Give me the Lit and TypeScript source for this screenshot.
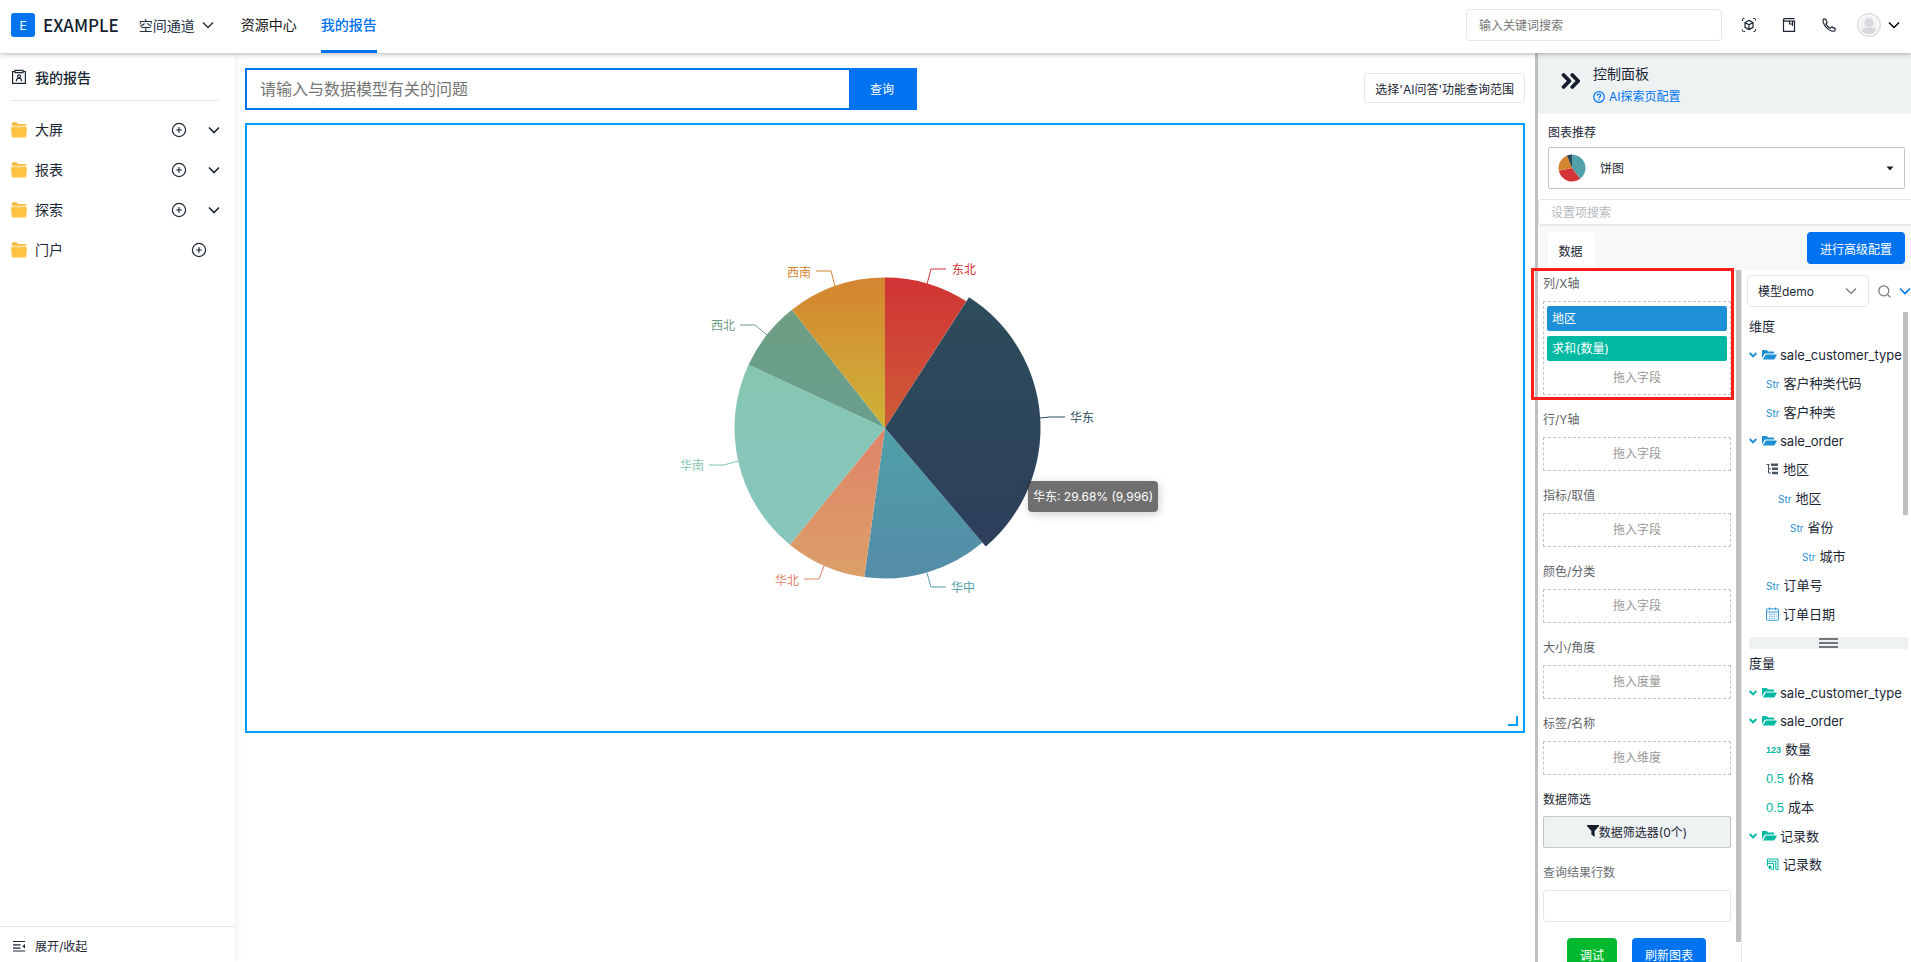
import { LitElement, html, svg, css } from "lit";
import { customElement, property } from "lit/decorators.js";
import { classMap } from "lit/directives/class-map.js";

type Slice = {
  name: string;
  from: number;
  to: number;
  top: string;
  bottom: string;
  line: string;
  x: number;
  y: number;
  anchor: string;
  active?: boolean;
};

const SLICES: Slice[] = [
  { name: "东北", from: 0, to: 32.7, top: "#d13334", bottom: "#ce5c38", line: "42,-144 46,-159 61,-159", x: 67, y: -154, anchor: "start" },
  { name: "华中", from: 139.6, to: 187.9, top: "#4ea0a9", bottom: "#558ca8", line: "42,145 46,159 61,159", x: 66, y: 164, anchor: "start" },
  { name: "华北", from: 187.9, to: 219.2, top: "#df8368", bottom: "#dca069", line: "-61,138 -66,151 -81,151", x: -86, y: 157, anchor: "end" },
  { name: "华南", from: 219.2, to: 294.9, top: "#86c6b1", bottom: "#87c5be", line: "-147,33 -161,37 -176,37", x: -181, y: 42, anchor: "end" },
  { name: "西北", from: 294.9, to: 321.8, top: "#6d9e83", bottom: "#6a9f8f", line: "-118,-93 -130,-103 -145,-103", x: -150, y: -98, anchor: "end" },
  { name: "西南", from: 321.8, to: 360, top: "#d58430", bottom: "#ceb439", line: "-50,-142 -54,-157 -69,-157", x: -74, y: -151, anchor: "end" },
  { name: "华东", from: 32.7, to: 139.6, top: "#2d4c5b", bottom: "#2d3f5b", line: "155,-10 165,-11 180,-11", x: 185, y: -6, anchor: "start", active: true },
];

const sector = (from: number, to: number, r: number, cx = 0, cy = 0) => {
  const point = (deg: number) => {
    const a = (deg * Math.PI) / 180;
    return `${(cx + r * Math.sin(a)).toFixed(2)} ${(cy - r * Math.cos(a)).toFixed(2)}`;
  };
  return `M${cx} ${cy}L${point(from)}A${r} ${r} 0 ${to - from > 180 ? 1 : 0} 1 ${point(to)}Z`;
};

const FONT = css`Inter, "Noto Sans CJK SC", sans-serif`;

const base = css`
  *, *::before, *::after { box-sizing: border-box; }
  svg { display: block; flex: none; }
  button, input, select { font: inherit; color: inherit; margin: 0; }
  button { cursor: pointer; padding: 0; border: 0; background: none; display: flex; align-items: center; justify-content: center; }
  a { color: inherit; text-decoration: none; }
  h1, h2, h3, p, ul { margin: 0; padding: 0; font: inherit; }
  ul { list-style: none; }
`;

const chevron = (size = 12, width = 2) => html`<svg width=${size} height=${size} viewBox="0 0 12 12" fill="none" stroke="currentColor" stroke-width=${width}><path d="M1 3.5L6 8.5L11 3.5" /></svg>`;

@customElement("app-header")
class AppHeader extends LitElement {
  static styles = [base, css`
    .bar { display: flex; align-items: center; height: 53px; background: #fff; box-shadow: 0 1px 5px rgba(0, 0, 0, 0.3); padding: 0 11px 3px; position: relative; z-index: 2; font-size: 14px; }
    .logo { width: 24px; height: 24px; border-radius: 3px; background: #0073f0; color: #fff; font-size: 12px; display: grid; place-items: center; margin-right: 8px; }
    .brand { font-family: "Noto Sans CJK SC", sans-serif; font-size: 17px; line-height: 24px; font-weight: 500; color: #141e2d; margin-right: 20px; }
    .space { gap: 7px; color: #243042; }
    .nav { display: flex; gap: 24px; margin: 0 0 -3px 27px; align-self: stretch; }
    .nav a { display: flex; align-items: center; border-bottom: 3px solid transparent; padding-bottom: 2px; color: #141414; }
    .nav a.current { color: #0073f0; border-bottom-color: #0073f0; font-weight: 500; }
    .search { margin-left: auto; width: 256px; height: 32px; border: 1px solid #e4e6e8; border-radius: 4px; padding: 0 12px; font-size: 12px; outline: none; background: #fff; }
    .search::placeholder { color: #757575; opacity: 1; }
    .tools { display: flex; align-items: center; gap: 24px; margin: 0 20px 0 19px; }
    .user { gap: 7px; }
  `];

  render() {
    return html`
      <header class="bar">
        <span class="logo">E</span>
        <span class="brand">EXAMPLE</span>
        <button class="space">空间通道 ${chevron(12, 1.4)}</button>
        <nav class="nav">
          <a href="#resources">资源中心</a>
          <a href="#reports" class="current">我的报告</a>
        </nav>
        <input class="search" type="search" aria-label="关键词搜索" placeholder="输入关键词搜索" />
        <div class="tools">
          <button aria-label="模型">
            <svg width="16" height="16" viewBox="0 0 16 16" fill="none" stroke="#1d2735" stroke-width="1.1"><path d="M1.500 4V1.500H4M12 1.500H14.500V4M14.500 12V14.500H12M4 14.500H1.500V12" stroke-dasharray="1.800 .9" /><path d="M8 3.400L12 5.500V10.300L8 12.600L4 10.300V5.500ZM4 5.500L8 7.800L12 5.500M8 7.800V12.600" stroke-width="1.200" /></svg>
          </button>
          <button aria-label="文档">
            <svg width="16" height="16" viewBox="0 0 16 16" fill="none" stroke="#1d2735" stroke-width="1.2"><path d="M13.5 1.6H3.6Q2.5 1.6 2.5 2.8V14.4H13.5V4.2H3.6Q2.5 4.2 2.5 2.8M8.500 4.400V7H11.500V9V4.400" /></svg>
          </button>
          <button aria-label="电话">
            <svg width="16" height="16" viewBox="0 0 16 16" fill="none" stroke="#1d2735" stroke-width="1.2" stroke-linejoin="round"><path d="M2.400 2.200L4.600 2L6.200 5.400L4.900 7Q6.400 9.800 9.200 11.200L10.800 9.900L14.200 11.600L13.900 13.800Q12.600 14.600 10.800 14Q4.600 11.800 2.200 5.400Q1.700 3.400 2.400 2.200Z" /></svg>
          </button>
        </div>
        <button class="user" aria-label="用户">
          <svg width="24" height="24" viewBox="0 0 24 24"><circle cx="12" cy="12" r="11.200" fill="#fff" stroke="#dcdee2" stroke-width="1.500" /><circle cx="12" cy="12" r="9.300" fill="#f1f2f4" /><circle cx="12" cy="9.600" r="4.500" fill="#d6d8dc" /><path d="M4.600 17.600Q6 14.600 9.600 14.200Q12 15.600 14.400 14.200Q18 14.600 19.400 17.600Q16.500 21.300 12 21.300Q7.500 21.300 4.600 17.600Z" fill="#d6d8dc" /></svg>
          ${chevron(12, 1.5)}
        </button>
      </header>`;
  }
}

@customElement("app-sidebar")
class AppSidebar extends LitElement {
  static styles = [base, css`
    :host { display: flex; flex-direction: column; width: 235px; flex: none; box-shadow: 2px 0 6px rgba(0, 0, 0, 0.06); background: #fff; color: #1c2736; font-size: 14px; }
    .title { display: flex; align-items: center; gap: 8px; margin: 0 16px 9px 11px; height: 48px; border-bottom: 1px solid #e2e4e6; font-weight: 500; }
    .row { display: flex; align-items: center; height: 40px; padding: 0 15px 0 11px; }
    .name { margin: 0 auto 0 8px; padding-bottom: 2px; }
    .add { width: 16px; margin-right: 21px; }
    .row.leaf .add { margin-right: 13px; }
    .foot { margin-top: auto; height: 36px; border-top: 1px solid #e2e4e6; justify-content: flex-start; gap: 9px; padding: 2px 12px 0; font-size: 12px; width: 100%; }
  `];

  render() {
    return html`
      <h2 class="title">
        <svg width="16" height="16" viewBox="0 0 16 16" fill="none" stroke="#1c2736" stroke-width="1.2"><path d="M4 2.500H1.600V14.400H14.400V2.500H12M4 1.400H12V3.600H4Z" /><circle cx="8" cy="7.300" r="1.500" /><path d="M5.300 12.200Q5.600 9.200 8 9.200Q10.400 9.200 10.700 12.200" /></svg>
        我的报告
      </h2>
      ${["大屏", "报表", "探索", "门户"].map((name, i) => html`
        <div class=${classMap({ row: true, leaf: i === 3 })}>
          <svg width="16" height="16" viewBox="0 0 16 16"><path d="M1 5V1.200Q1 .3 2 .3H5.500L7 1.900H14Q15 1.900 15 2.800V5Z" fill="#f9b93d" /><path d="M1 3.600H15V6H1Z" fill="#fde3a6" /><path d="M0 5.200H16L15.200 14.600Q15.100 15.600 14 15.600H2Q.9 15.600 .8 14.600Z" fill="#ffc242" /></svg>
          <span class="name">${name}</span>
          <button class="add" aria-label="新建${name}">
            <svg width="16" height="16" viewBox="0 0 16 16" fill="none" stroke="#1c2736" stroke-width="1.200"><circle cx="8" cy="8" r="6.600" /><path d="M8 5.200V10.800M5.200 8H10.800" /></svg>
          </button>
          ${i < 3 ? html`<button aria-label="展开${name}">${chevron(12, 1.6)}</button>` : null}
        </div>`)}
      <button class="foot">
        <svg width="14" height="14" viewBox="0 0 14 14" fill="none" stroke="#1c2736" stroke-width="1.200"><path d="M1 2.500H13M1 5.800H8.500M1 9.100H8.500M1 12H13" /><path d="M13 5L10.300 7.300L13 9.600Z" fill="#1c2736" stroke="none" /></svg>
        展开/收起
      </button>`;
  }
}

@customElement("pie-board")
class PieBoard extends LitElement {
  static styles = [base, css`
    :host { display: block; flex: 1; min-width: 0; padding: 15px 10px 0 10px; font-size: 12px; }
    .ask { display: flex; align-items: center; justify-content: space-between; gap: 16px; margin-bottom: 13px; }
    .form { display: flex; width: 672px; height: 42px; border: 2px solid #0073f0; }
    .form input { flex: 1; min-width: 0; border: 0; outline: none; padding: 0 13px; font-size: 16px; background: #fff; }
    .form input::placeholder { color: #757575; opacity: 1; }
    .form button { width: 66px; padding-bottom: 2px; background: #0073f0; color: #fff; }
    .scope { height: 30px; border: 1px solid #e4e6e8; border-radius: 4px; padding: 0 10px; margin-bottom: 2px; color: #1c2736; white-space: nowrap; }
    .board { position: relative; display: flex; align-items: center; justify-content: center; height: 610px; border: 2px solid #009dff; }
    .plot { position: relative; width: 520px; height: 370px; }
    .tip { position: absolute; left: 403px; top: 238px; padding: 0 5px; line-height: 31px; border-radius: 4px; background: rgba(50, 50, 50, 0.7); color: #fff; white-space: nowrap; box-shadow: 1px 2px 10px rgba(0, 0, 0, 0.2); }
    .grip { position: absolute; right: 5px; bottom: 5px; width: 10px; height: 10px; border: solid #009dff; border-width: 0 2px 2px 0; }
    text { font-size: 12px; }
  `];

  render() {
    return html`
      <div class="ask">
        <form class="form">
          <input type="text" aria-label="问题" placeholder="请输入与数据模型有关的问题" />
          <button type="button">查询</button>
        </form>
        <button class="scope">选择'AI问答'功能查询范围</button>
      </div>
      <section class="board">
        <div class="plot">
          <svg width="520" height="370" viewBox="-260 -185 520 370" role="img" aria-label="饼图">
            <defs>
              ${SLICES.map((s, i) => svg`<linearGradient id="g${i}" x1="0" y1="0" x2="0" y2="1"><stop offset="0" stop-color=${s.top} /><stop offset="1" stop-color=${s.bottom} /></linearGradient>`)}
            </defs>
            ${SLICES.map((s, i) => svg`
              <path d=${sector(s.from, s.to, s.active ? 155.5 : 150.5)} fill="url(#g${i})" />
              <polyline points=${s.line} fill="none" stroke=${s.top} />
              <text x=${s.x} y=${s.y} text-anchor=${s.anchor} fill=${s.top}>${s.name}</text>`)}
          </svg>
          <div class="tip">华东: 29.68% (9,996)</div>
        </div>
        <span class="grip"></span>
      </section>`;
  }
}

type Node = { kind: "folder" | "str" | "tree" | "date" | "int" | "dec" | "count"; label: string; level: number };

const DIMENSIONS: Node[] = [
  { kind: "folder", label: "sale_customer_type", level: 0 },
  { kind: "str", label: "客户种类代码", level: 0 },
  { kind: "str", label: "客户种类", level: 0 },
  { kind: "folder", label: "sale_order", level: 0 },
  { kind: "tree", label: "地区", level: 0 },
  { kind: "str", label: "地区", level: 1 },
  { kind: "str", label: "省份", level: 2 },
  { kind: "str", label: "城市", level: 3 },
  { kind: "str", label: "订单号", level: 0 },
  { kind: "date", label: "订单日期", level: 0 },
];

const MEASURES: Node[] = [
  { kind: "folder", label: "sale_customer_type", level: 0 },
  { kind: "folder", label: "sale_order", level: 0 },
  { kind: "int", label: "数量", level: 0 },
  { kind: "dec", label: "价格", level: 0 },
  { kind: "dec", label: "成本", level: 0 },
  { kind: "folder", label: "记录数", level: 0 },
  { kind: "count", label: "记录数", level: 0 },
];

@customElement("field-tree")
class FieldTree extends LitElement {
  @property({ attribute: false }) nodes: Node[] = [];

  static styles = [base, css`
    :host { display: block; color: #1c2736; font-size: 13px; line-height: 28px; white-space: nowrap; }
    li { display: flex; align-items: center; height: 28px; }
    .leaf { padding-left: 17px; gap: 4px; margin-bottom: 1px; }
    .level1 { padding-left: 29px; }
    .level2 { padding-left: 41px; }
    .level3 { padding-left: 53px; }
    .mark { color: var(--tone); }
    .folder .mark { display: flex; align-items: center; gap: 5px; margin-right: 3px; }
    .str { font-size: 10px; }
    .int { font: 700 9px/28px "Liberation Sans", sans-serif; }
    .dec { font: 400 13px/28px "Liberation Sans", sans-serif; }
  `];

  icon(kind: Node["kind"]) {
    switch (kind) {
      case "folder":
        return html`
          <svg width="8" height="8" viewBox="0 0 8 8" fill="none" stroke="currentColor" stroke-width="2"><path d="M.7 2L4 5.400L7.300 2" /></svg>
          <svg width="15" height="12" viewBox="0 0 15 12" fill="currentColor"><path d="M0 9.500V1.800Q0 1 .9 1H4.600L6.200 2.600H11.200Q12.200 2.600 12.200 3.600V4.600H4Q2.800 4.600 2.200 5.600Z" /><path d="M3.800 5.600H15L12.600 10Q12.200 10.600 11.400 10.600H.9Z" /></svg>`;
      case "str":
        return html`<span class="str">Str</span>`;
      case "int":
        return html`<span class="int">123</span>`;
      case "dec":
        return html`<span class="dec">0.5</span>`;
      case "tree":
        return html`<svg width="13" height="12" viewBox="0 0 13 12" fill="none" stroke="#4a545f"><path d="M.5 1.500H3.500M2.500 1.500V10H5M2.500 5.800H5" stroke-width="1" /><path d="M5 1.800H12M6 5.800H12M6 10H12" stroke-width="2.400" /></svg>`;
      case "date":
        return html`<svg width="13" height="14" viewBox="0 0 13 14" fill="none" stroke="currentColor" stroke-width=".9"><rect x=".5" y="1.800" width="12" height="11.500" rx="1" /><path d="M.5 5H12.500M3.500 .5V3M9.500 .5V3" /><path d="M3 7.200H10.500M3 9.200H10.500M3 11.200H10.500" stroke-dasharray="1.300 1" /></svg>`;
      case "count":
        return html`<svg width="13" height="12" viewBox="0 0 13 12" fill="none" stroke="currentColor" stroke-width="1"><path d="M1.500 8V1H12V11.500H10M1.500 3.200H9.800V11.500M1.500 5.400H7.500V11.500H5.500M1.500 8V5.400" /><path d="M3 8H5V10.500H3Z" fill="currentColor" /></svg>`;
    }
  }

  render() {
    return html`<ul>${this.nodes.map((n) => html`
      <li class=${classMap({ folder: n.kind === "folder", leaf: n.kind !== "folder", [`level${n.level}`]: n.level > 0 })}>
        <span class="mark">${this.icon(n.kind)}</span><span>${n.label}</span>
      </li>`)}</ul>`;
  }
}

@customElement("control-panel")
class ControlPanel extends LitElement {
  static styles = [base, css`
    :host { display: flex; flex-direction: column; width: 376px; flex: none; border-left: 3px solid #c0c0c0; background: #fff; color: #1c2736; font-size: 12px; }
    .head { display: flex; align-items: flex-start; gap: 12px; height: 61px; padding: 9px 0 0 23px; background: #eef2f3; flex: none; }
    .fold { height: 38px; }
    .head h2 { font-size: 14px; line-height: 24px; }
    .help { display: flex; align-items: center; gap: 4px; color: #0073f0; line-height: 22px; }
    .recommend { padding: 10px 6px 10px 10px; }
    .recommend label { display: block; line-height: 18px; margin-bottom: 5px; }
    .picker { position: relative; }
    .picker select { width: 100%; height: 42px; border: 1px solid #c4c6c8; border-radius: 2px; background: #fff; appearance: none; padding: 0 51px; }
    .picker .pie { position: absolute; left: 10px; top: 7px; }
    .picker .caret { position: absolute; right: 11px; top: 19px; }
    .find { height: 26px; border: 1px solid #e4e6e8; border-right: 0; border-radius: 4px 0 0 4px; padding: 0 12px; outline: none; flex: none; background: #fff; }
    .find::placeholder { color: #b4b8bc; opacity: 1; }
    .tabs { display: flex; justify-content: space-between; align-items: flex-start; height: 45px; padding: 6px 6px 0 10px; background: #f7f8fa; border-top: 1px solid #e4e6e8; flex: none; }
    .tab { height: 38px; width: 47px; padding: 0 2px 2px 0; background: #fff; border-radius: 4px 4px 0 0; }
    .primary { height: 32px; padding: 0 13px; border-radius: 4px; background: #0073f0; color: #fff; }
    .body { display: flex; flex: 1; min-height: 0; }
    .slots { position: relative; width: 203px; flex: none; overflow: hidden; padding: 0 10px 0 5px; }
    .thumb { position: absolute; width: 5px; background: #c0c0c0; }
    .slots .thumb { right: 0; top: 0; bottom: 20px; }
    .slot h3 { color: #5f6468; line-height: 18px; padding: 5px 0 8px; }
    .drop { display: flex; flex-direction: column; gap: 5px; border: 1px dashed #c4c4c4; padding: 4px 3px; margin-bottom: 11px; line-height: 24px; color: #999; text-align: center; }
    .chip { height: 25px; border-radius: 2px; padding: 0 5px; color: #fff; justify-content: flex-start; }
    .chip.dim { background: #1e90d6; }
    .chip.mea { background: #00b9a3; }
    .slot h3.strong { color: #1c2736; padding-bottom: 7px; }
    .filter { width: 100%; height: 32px; padding-bottom: 2px; border: 1px solid #c4c6c8; border-radius: 2px; background: #eef2f3; margin-bottom: 11px; }
    .rows { display: block; color: #6b7075; line-height: 18px; padding: 5px 0 8px; }
    .limit { width: 100%; height: 32px; border: 1px solid #e4e6e8; border-radius: 4px; outline: none; padding: 0 8px; }
    .actions { display: flex; gap: 15px; padding-left: 24px; margin-top: 16px; }
    .go { background: #00b92f; }
    .mark { position: absolute; z-index: 3; left: -7px; top: -2px; width: 203px; height: 132px; border: 3px solid #ff1f1a; }
    .area { position: relative; display: flex; flex: 1; min-width: 0; }
    .fields { flex: 1; min-width: 0; border-left: 1px solid #e4e6e8; padding-left: 5px; overflow: hidden; }
    .model { display: flex; align-items: center; height: 32px; margin-top: 5px; color: #1c2736; }
    .model .choice { position: relative; width: 123px; margin-right: 9px; }
    .model select { width: 100%; height: 32px; border: 1px solid #e4e6e8; border-radius: 4px; appearance: none; background: #fff; padding: 0 10px; }
    .choice svg { position: absolute; right: 12px; top: 10px; color: #777; }
    .more { color: #0073f0; margin-left: 8px; }
    .tree { position: relative; padding-left: 2px; --tone: #1e90d6; }
    .tree.green { --tone: #00b9a3; }
    .tree h3 { font-size: 13px; line-height: 28px; padding: 5px 0 1px; }
    .tree.green h3 { padding: 0 0 2px; }
    .tree .thumb { right: 3px; top: 5px; height: 203px; }
    .split { display: grid; place-items: center; height: 12px; background: #eef2f3; margin: 9px 3px 0 2px; }
  `];

  slotBox(title: string, hint: string, chips: unknown = null) {
    return html`<section class="slot"><h3>${title}</h3><div class="drop">${chips}<span>${hint}</span></div></section>`;
  }

  render() {
    return html`
      <header class="head">
        <svg class="fold" width="20" viewBox="0 0 20 18" fill="none" stroke="#141e2d" stroke-width="3.800" stroke-linecap="round" stroke-linejoin="round"><path d="M2.600 3L8.400 9L2.600 15M11.300 3L17.100 9L11.300 15" /></svg>
        <div>
          <h2>控制面板</h2>
          <a class="help" href="#help">
            <svg width="12" height="12" viewBox="0 0 12 12" fill="none" stroke="currentColor" stroke-width="1.200"><circle cx="6" cy="6" r="5.300" /><path d="M4.300 4.800Q4.400 3.200 6 3.200Q7.700 3.200 7.700 4.600Q7.700 5.400 6.800 5.900Q6 6.300 6 7.200M6 8V9.200" stroke-width="1.300" /></svg>
            AI探索页配置
          </a>
        </div>
      </header>
      <div class="recommend">
        <label for="chart">图表推荐</label>
        <div class="picker">
          <select id="chart"><option>饼图</option></select>
          <svg class="pie" width="28" height="28" viewBox="0 0 28 28">
            <path d=${sector(0, 143, 13.5, 14, 14)} fill="#52a1a8" />
            <path d=${sector(143, 258, 13.5, 14, 14)} fill="#d13337" />
            <path d=${sector(258, 338, 13.5, 14, 14)} fill="#d58430" />
            <path d=${sector(338, 360, 13.5, 14, 14)} fill="#2f4554" />
          </svg>
          <svg class="caret" width="8" height="5" viewBox="0 0 8 5"><path d="M.5 .5H7.500L4 4.500Z" fill="#141e2d" /></svg>
        </div>
      </div>
      <input class="find" type="text" aria-label="设置项搜索" placeholder="设置项搜索" />
      <div class="tabs">
        <button class="tab">数据</button>
        <button class="primary">进行高级配置</button>
      </div>
      <div class="body">
        <div class="area">
          <div class="slots">
            ${this.slotBox("列/X轴", "拖入字段", html`<button class="chip dim">地区</button><button class="chip mea">求和(数量)</button>`)}
            ${this.slotBox("行/Y轴", "拖入字段")}
            ${this.slotBox("指标/取值", "拖入字段")}
            ${this.slotBox("颜色/分类", "拖入字段")}
            ${this.slotBox("大小/角度", "拖入度量")}
            ${this.slotBox("标签/名称", "拖入维度")}
            <section class="slot">
              <h3 class="strong">数据筛选</h3>
              <button class="filter">
                <svg width="12" height="12" viewBox="0 0 12 12"><path d="M0 0H12V1L7.600 6V12L4.400 9.600V6L0 1Z" fill="#141e2d" /></svg>数据筛选器(0个)
              </button>
            </section>
            <label class="rows" for="limit">查询结果行数</label>
            <input class="limit" id="limit" type="text" />
            <div class="actions">
              <button class="primary go">调试</button>
              <button class="primary">刷新图表</button>
            </div>
            <span class="thumb"></span>
          </div>
          <span class="mark"></span>
          <div class="fields">
            <div class="model">
              <div class="choice">
                <select aria-label="模型"><option>模型demo</option></select>
                ${chevron(12, 1.2)}
              </div>
              <button aria-label="搜索字段">
                <svg width="13" height="13" viewBox="0 0 13 13" fill="none" stroke="#777" stroke-width="1.200"><circle cx="5.800" cy="5.800" r="5" /><path d="M9.400 9.400L12.400 12.400" /></svg>
              </button>
              <button class="more" aria-label="更多">${chevron(12, 1.6)}</button>
            </div>
            <section class="tree">
              <h3>维度</h3>
              <field-tree .nodes=${DIMENSIONS}></field-tree>
              <span class="thumb"></span>
            </section>
            <div class="split">
              <svg width="19" height="10" viewBox="0 0 19 10" stroke="#4c4f52" stroke-width="1.300"><path d="M0 1H19M0 5H19M0 9H19" /></svg>
            </div>
            <section class="tree green">
              <h3>度量</h3>
              <field-tree .nodes=${MEASURES}></field-tree>
            </section>
          </div>
        </div>
      </div>`;
  }
}

@customElement("app-root")
class AppRoot extends LitElement {
  static styles = [base, css`
    :host { display: flex; flex-direction: column; height: 100vh; overflow: hidden; background: #fff; font-family: ${FONT}; }
    .page { display: flex; flex: 1; min-height: 0; }
  `];

  render() {
    return html`
      <app-header></app-header>
      <div class="page">
        <app-sidebar></app-sidebar>
        <pie-board></pie-board>
        <control-panel></control-panel>
      </div>`;
  }
}
